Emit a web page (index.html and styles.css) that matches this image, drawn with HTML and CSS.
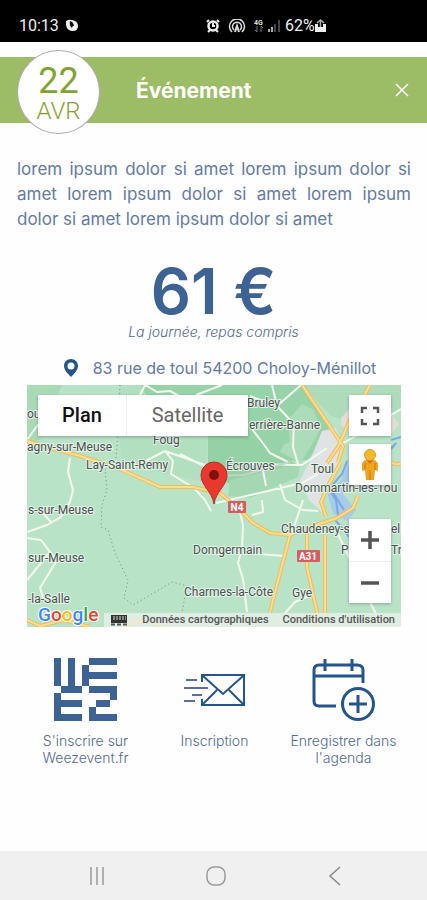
FILE: index.html
```html
<!DOCTYPE html>
<html lang="fr">
<head>
<meta charset="utf-8">
<meta name="viewport" content="width=device-width, initial-scale=1">
<title>Événement</title>
<link rel="stylesheet" href="styles.css">
</head>
<body>
<div class="status">
  <div class="status-left">
    <span>10:13</span>
    <svg width="14" height="14" viewBox="0 0 14 14"><path d="M1 2Q4 0 7 1Q13 2 13 7Q13 12 8 12Q2 12 1 6Z" fill="#eee"/><path d="M5 2Q9 3 9 8Q8 10 7 9Q4 7 5 2Z" fill="#111"/><circle cx="9" cy="9" r="2" fill="#fff"/></svg>
  </div>
  <div class="status-right">
    <svg width="14" height="14" viewBox="0 0 14 14" fill="none" stroke="#eee" stroke-width="2.500"><circle cx="7" cy="7" r="4.500"/><path d="M7 4V7H9M1 3L3 1M13 3L11 1M2 13L4 11M12 13L10 11" stroke-width="2"/></svg>
    <svg class="cast" width="18" height="14" viewBox="0 0 18 14" fill="none" stroke="#ddd" stroke-width="1.500"><path d="M4 13A7.500 7.500 0 1 1 14 13M6 11A4.500 4.500 0 1 1 12 11"/><path d="M7 13L9 7L11 13" stroke-width="2"/></svg>
    <svg class="data" width="10" height="14" viewBox="0 0 10 14" fill="none"><text x="0" y="6" class="tiny">4G</text><path d="M3 7V13M1 11L3 13M7 13V7L9 9" stroke="#777"/></svg>
    <svg width="13" height="14" viewBox="0 0 13 14"><path d="M0 10h2v3H0zM3 8h2v5H3z" fill="#aaa"/><path d="M6 5h2v8H6zM10 1h2v12h-2z" fill="#444"/></svg>
    <span class="battery">62%<svg width="11" height="14" viewBox="0 0 11 14"><path d="M0 5h3v3h5V5h3v8H0z" fill="#eee"/><path d="M5.500 1V8M2 4L5.500 1L9 4" fill="none" stroke="#aaa" stroke-width="1.500"/></svg></span>
  </div>
</div>

<header class="bar">
  <time class="date" datetime="04-22"><span class="day">22</span><span class="month">AVR</span></time>
  <h1>Événement</h1>
  <button class="close" aria-label="Fermer"><svg width="14" height="14" viewBox="0 0 14 14" stroke="#fff" stroke-width="1.500"><path d="M1 1L13 13M13 1L1 13"/></svg></button>
</header>

<main>
  <p class="intro">lorem ipsum dolor si amet lorem ipsum dolor si amet lorem ipsum dolor si amet lorem ipsum dolor si amet lorem ipsum dolor si amet</p>
  <p class="price">61 €</p>
  <p class="note">La journée, repas compris</p>
  <p class="address">
    <svg width="16" height="20" viewBox="0 0 16 20"><path fill-rule="evenodd" d="M8 1C4 1 1 4 1 8C1 12 5 16 8 19C11 16 15 12 15 8C15 4 12 1 8 1ZM8 4.500A3.500 3.500 0 1 1 8 11.500A3.500 3.500 0 1 1 8 4.500Z" fill="#265589"/></svg>
    <span>83 rue de toul 54200 Choloy-Ménillot</span>
  </p>

  <section class="map" aria-label="Carte">
    <svg class="map-art" viewBox="27 385 374 242" preserveAspectRatio="xMidYMid slice">
      <rect x="27" y="385" width="374" height="242" fill="#b9e3c7"/>
      <path d="M119 385L118 432L122 458L150 470L205 482L208 430L240 410L270 385Z" fill="#b1dfbf"/>
      <path d="M27 385H62L40 440L27 446Z" fill="#a9dab6"/>
      <path d="M141 385H302L330 429L308 460L225 463L208 455V436H168Z" fill="#97d3a8"/>
      <path d="M208 436V468L240 492L285 478L300 466L270 450L250 437Z" fill="#94d1a5"/>
      <path d="M302 404L314 410L320 430L310 448L300 464L292 458L280 452L284 444L290 442L288 420Z" fill="#addcba"/>
      <path d="M302 385H401V410L352 424L330 415Z" fill="#aedcba"/>
      <path d="M230 480L285 467L300 465L298 477L250 498L228 496Z" fill="#a4d8b2"/>
      <path d="M322 431L336 428L343 450L336 470L321 492L322 512L309 500L300 480L309 463Z" fill="#dfe3e3"/>
      <path d="M341 418L350 408V432L341 426ZM391 414L399 424L391 434Z" fill="#e3ddd2"/>
      <path d="M347 458L341 481L327 492L333 514L348 521L356 510L343 494L351 478Z" fill="#a7cbe8"/>
      <g fill="none" stroke="#79a8e7" stroke-width="2"><path d="M347 461L342 474L329 489L336 500L338 515M332 491L344 510M391 440L401 437M335 520L343 529L349 537M391 449L396 443"/></g>
      <path d="M120 385L118 430L116 459L105 470L107 490L102 505L101 527L108 530L115 553L128 580L124 598L133 605L172 582L187 586L182 612" fill="none" stroke="#71877a" stroke-dasharray="1 3"/>
      <g fill="none" stroke="#f3f9ef" stroke-width="2" stroke-linejoin="round">
        <path d="M27 440L45 415L55 398M70 458L68 472L73 490L70 502L61 517L47 525L27 532M41 511L51 522M27 538L41 540L50 552L27 580M50 552L57 560L40 588L44 600M140 395L145 385L157 392L170 391L190 402M196 395L222 385M165 451L130 469M165 451L205 465M165 451L173 461L171 474L194 488L205 500L211 511M272 385L277 406L294 424L293 447L298 464M277 406L250 396M277 406L301 385M252 429L262 442L270 453L288 462M180 454L208 468M302 465L327 448M340 445L401 409M302 465L240 464M262 465L266 486M216 503L302 483L318 474M280 484L285 500L303 510L318 511M240 512L243 525L242 548L238 563L243 579L247 612M262 500L263 512L252 515M243 553L284 556M303 500L291 536M285 613L295 602L315 593M336 530L350 559M370 602L380 622"/>
      </g>
      <path d="M202 476L244 475L290 462" fill="none" stroke="#c5d2c9" stroke-width="2"/>
      <g fill="none" stroke="#eebc58" stroke-width="4" stroke-linejoin="round">
        <path d="M27 441L50 448L80 456L120 469L160 487L193 487L220 493L240 510L253 523L270 533L290 535L310 527L337 518L353 508L358 496"/>
        <path d="M302 385L343 446L338 462M370 385L350 420L338 447L327 463M341 462L330 482L321 502L326 516M290 535L280 573L270 612M325 535V613M307 525V567L317 612L318 627M391 462Q396 466 401 463M27 620L40 626L64 620L90 627M122 627L135 622H150L165 627"/>
      </g>
      <g fill="none" stroke="#ffdc91" stroke-width="2" stroke-linejoin="round">
        <path d="M27 441L50 448L80 456L120 469L160 487L193 487L220 493L240 510L253 523L270 533L290 535L310 527L337 518L353 508L358 496M302 385L343 446L338 462M370 385L350 420L338 447L327 463M341 462L330 482L321 502L326 516M290 535L280 573L270 612M325 535V613M307 525V567L317 612L318 627M391 462Q396 466 401 463M27 620L40 626L64 620L90 627M122 627L135 622H150L165 627"/>
      </g>
      <g class="places">
        <text x="27" y="418">ou</text>
        <text x="247" y="407">Bruley</text>
        <text x="249" y="429">errière-Banne</text>
        <text x="153" y="444">Foug</text>
        <text x="27" y="451">agny-sur-Meuse</text>
        <text x="86" y="469">Lay-Saint-Remy</text>
        <text x="226" y="470">Écrouves</text>
        <text x="311" y="473">Toul</text>
        <text x="295" y="492">Dommartin-lès-Tou</text>
        <text x="28" y="514">s-sur-Meuse</text>
        <text x="281" y="533">Chaudeney-s</text>
        <text x="391" y="533">el</text>
        <text x="193" y="554">Domgermain</text>
        <text x="341" y="554">P</text>
        <text x="391" y="554">Tr</text>
        <text x="28" y="562">sur-Meuse</text>
        <text x="184" y="596">Charmes-la-Côte</text>
        <text x="292" y="597">Gye</text>
        <text x="28" y="603">-la-Salle</text>
      </g>
      <g class="shields"><rect x="228" y="501" width="18" height="12" rx="1"/><text x="237" y="511">N4</text><rect x="297" y="550" width="23" height="12" rx="1"/><text x="308" y="560">A31</text></g>
      <path d="M214 504C212 491 201 486 201 475A13 13 0 0 1 227 475C227 486 216 491 214 504Z" fill="#e9382f" stroke="#bd2a24"/>
      <circle cx="214" cy="475" r="5" fill="#82110e"/>
      <text class="google" x="38" y="621"><tspan fill="#4285f4">G</tspan><tspan fill="#ea4335">o</tspan><tspan fill="#fbbc05">o</tspan><tspan fill="#4285f4">g</tspan><tspan fill="#34a853">l</tspan><tspan fill="#ea4335">e</tspan></text>
    </svg>
    <div class="types"><button class="selected">Plan</button><button>Satellite</button></div>
    <div class="tools">
      <button class="tool" aria-label="Plein écran"><svg width="20" height="20" viewBox="0 0 20 20" fill="none" stroke="#555" stroke-width="2.500"><path d="M2 7V2H7M13 2H18V7M18 13V18H13M7 18H2V13"/></svg></button>
      <button class="tool" aria-label="Street View"><svg width="20" height="34" viewBox="0 0 20 34"><path d="M5 12H15L18 15V23L15 22L14 32H6L5 22L2 23V15Z" fill="#efa51c"/><path d="M10 22V32M5 15V22M15 15V22" stroke="#b87c23"/><path d="M6 11H14L10 16Z" fill="#df6222"/><circle cx="10" cy="7" r="5.500" fill="#f7b928" stroke="#d99828"/></svg></button>
      <div class="zooms">
        <button class="tool" aria-label="Zoom avant"><svg width="20" height="20" viewBox="0 0 20 20" stroke="#555" stroke-width="3.500"><path d="M1 10H19M10 1V19"/></svg></button>
        <button class="tool" aria-label="Zoom arrière"><svg width="20" height="20" viewBox="0 0 20 20" stroke="#555" stroke-width="3.500"><path d="M1 10H19"/></svg></button>
      </div>
    </div>
    <div class="credits">
      <svg width="18" height="11" viewBox="0 0 18 11"><path d="M1 0H17V8H1Z" fill="#333"/><path d="M3 2H16M3 4H16" stroke="#ddd" stroke-dasharray="2 1"/><path d="M1 9.500H17" stroke="#555" stroke-width="2" stroke-dasharray="4 2"/></svg>
      <span>Données cartographiques</span>
      <a href="#conditions">Conditions d'utilisation</a>
    </div>
  </section>

  <nav class="actions">
    <a href="#weezevent">
      <svg width="63" height="63" viewBox="0 0 9 9" fill="#3d6294"><path d="M0 0H1V4H0ZM2 0H3V4H4V5H1V4H2ZM4 1H5V4H4ZM5 0H9V1H5ZM5 2H9V3H5ZM5 4H9V6H8V5H5ZM0 5H1V6H4V7H1V8H4V9H0ZM6 6H8V7H6ZM5 7H6V8H9V9H5Z"/></svg>
      <span>S'inscrire sur Weezevent.fr</span>
    </a>
    <a href="#inscription">
      <svg width="63" height="63" viewBox="0 0 63 63" fill="none" stroke="#24558c" stroke-width="2"><path d="M19 24V17H61V47H19V41M20 18L40 36L60 18M20 46L34 32M60 46L46 32"/><path d="M3 22H14M1 30H25M9 37H19M1 43H12" stroke="#596f99"/></svg>
      <span>Inscription</span>
    </a>
    <a href="#agenda">
      <svg width="63" height="63" viewBox="0 0 63 63" fill="none" stroke="#24558c" stroke-width="3"><path d="M24 48H7Q2 48 2 43V12Q2 7 7 7H45Q51 7 51 12V25M2 18H51M13 1V13M40 1V13"/><circle cx="46" cy="46" r="15.500"/><path d="M46 37V55M37 46H55"/></svg>
      <span>Enregistrer dans l'agenda</span>
    </a>
  </nav>
</main>

<footer class="system">
  <button aria-label="Applications récentes"><svg width="20" height="20" viewBox="0 0 20 20" stroke="#999" stroke-width="1.500"><path d="M4 1V19M10 1V19M16 1V19"/></svg></button>
  <button aria-label="Accueil"><svg width="20" height="20" viewBox="0 0 20 20" fill="none" stroke="#999" stroke-width="1.500"><rect x="1" y="1" width="18" height="18" rx="7"/></svg></button>
  <button aria-label="Retour"><svg width="20" height="20" viewBox="0 0 20 20" fill="none" stroke="#888" stroke-width="1.500"><path d="M15 1L5 10L15 19"/></svg></button>
</footer>
</body>
</html>
```
FILE: styles.css
```css
* { box-sizing: border-box; }
body {
  margin: 0;
  min-height: 100vh;
  display: flex;
  flex-direction: column;
  background: #fefefe;
  color: #637aa5;
  font-family: Inter, "Liberation Sans", sans-serif;
}
p, h1 { margin: 0; }
button { border: 0; padding: 0; background: none; font: inherit; color: inherit; }
a { color: inherit; text-decoration: none; }
svg { display: block; flex: none; }

.status {
  display: flex;
  align-items: center;
  height: 42px;
  padding: 10px 34px 0 19px;
  background: #000;
  color: #eee;
  font: 16px/20px Roboto, sans-serif;
}
.status-left, .status-right { display: flex; align-items: center; flex: 1; }
.status-left { gap: 6px; }
.status-right { gap: 4px; }
.battery { display: flex; align-items: center; }
.cast { margin: 0 4px; }
.tiny { font-size: 7px; font-weight: 700; fill: #ddd; }

.bar {
  display: flex;
  align-items: center;
  height: 66px;
  margin-top: 15px;
  padding: 0 15px 0 17px;
  background: #9dbc66;
  color: #fff;
}
.date {
  display: flex;
  flex-direction: column;
  align-items: center;
  justify-content: center;
  flex: none;
  width: 83px;
  height: 84px;
  margin: 4px 36px 0 0;
  padding-top: 4px;
  border: 1px solid #aaa;
  border-radius: 50%;
  background: #fff;
  color: #7fa431;
  font-family: Roboto, sans-serif;
}
.day { font-size: 36px; line-height: 34px; }
.month { font-size: 24px; font-weight: 300; line-height: 26px; }
.bar h1 { flex: 1; padding-top: 2px; font-size: 21px; font-weight: 700; line-height: 28px; }
.close { display: grid; place-items: center; width: 20px; height: 20px; }

main { flex: 1; display: flex; flex-direction: column; padding: 34px 16px 24px; }
.intro { padding-left: 1px; font-size: 17px; line-height: 25px; text-align: justify; }
.price {
  margin-top: 27px;
  color: #3d6294;
  font-size: 63px;
  font-weight: 600;
  line-height: 64px;
  text-align: center;
}
.note { color: #536a97; font-size: 14px; font-weight: 300; font-style: italic; line-height: 18px; text-align: center; }
.address {
  display: flex;
  align-items: center;
  justify-content: center;
  gap: 14px;
  margin-top: 15px;
  padding-left: 12px;
  font-size: 16px;
  line-height: 24px;
}

.map { position: relative; margin: 5px 10px 0 11px; font-family: Roboto, sans-serif; }
.map-art { width: 100%; aspect-ratio: 374 / 242; }
.places text {
  font-size: 12px;
  fill: #47504c;
  stroke: #e5f2e8;
  stroke-width: 2px;
  paint-order: stroke;
}
.shields rect { fill: #d65d60; }
.shields text { fill: #fff; font-size: 10px; font-weight: 700; text-anchor: middle; }
.google {
  font: 500 19px Roboto, sans-serif;
  stroke: #fff;
  stroke-width: 2px;
  paint-order: stroke;
}
.types {
  position: absolute;
  top: 10px;
  left: 11px;
  display: flex;
  background: #fff;
  box-shadow: 0 1px 3px #0004;
  color: #666;
  font-size: 20px;
  line-height: 41px;
}
.types button { width: 121px; }
.types .selected { width: 89px; border-right: 1px solid #eee; color: #111; font-weight: 500; }
.tools { position: absolute; top: 10px; right: 10px; }
.tool {
  display: grid;
  place-items: center;
  width: 42px;
  height: 41px;
  margin-bottom: 8px;
  background: #fff;
  box-shadow: 0 1px 3px #0004;
}
.zooms { margin-top: 34px; background: #fff; box-shadow: 0 1px 3px #0004; }
.zooms .tool { height: 42px; margin: 0; box-shadow: none; }
.zooms .tool + .tool { border-top: 1px solid #eee; }
.credits {
  position: absolute;
  right: 0;
  bottom: 0;
  display: flex;
  align-items: center;
  gap: 14px;
  padding: 0 6px;
  background: #e9efeacc;
  color: #555;
  font-size: 11px;
  font-weight: 500;
  line-height: 14px;
}

.actions {
  display: grid;
  grid-template-columns: repeat(3, 1fr);
  gap: 16px;
  margin-top: 31px;
  padding: 0 11px 0 13px;
}
.actions a {
  display: flex;
  flex-direction: column;
  align-items: center;
  gap: 11px;
  color: #536a97;
  font-size: 14px;
  font-weight: 300;
  line-height: 17px;
  text-align: center;
}

.system {
  display: grid;
  grid-template-columns: repeat(3, 1fr);
  height: 49px;
  padding: 0 33px 0 38px;
  background: #f0f0f0;
}
.system button { display: grid; place-items: center; }
```
